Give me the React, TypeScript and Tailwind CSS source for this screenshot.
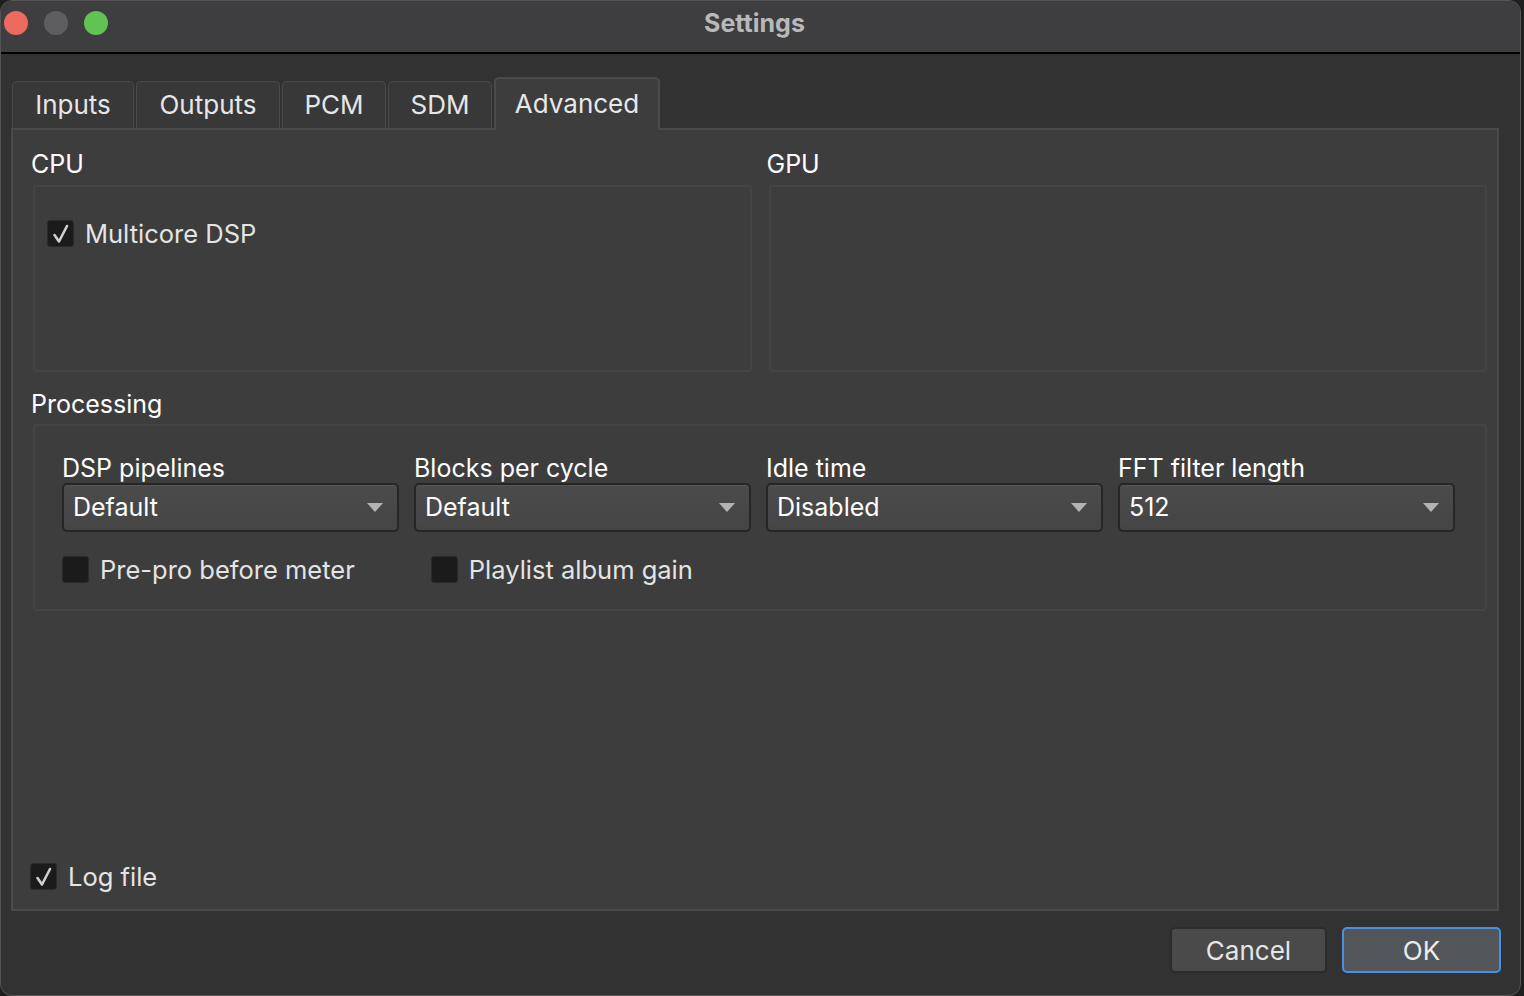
import React from "react";

const font = { fontFamily: "Inter, 'Noto Sans', sans-serif" };

const Check = ({ checked, label }: { checked?: boolean; label: string }) => (
  <div className="flex items-center gap-[11px]">
    <div className="w-[27px] h-[27px] rounded-[3px] bg-[#1b1b1b] border border-[#2b2b2b] flex items-center justify-center">
      {checked && (
        <svg width="18" height="20" viewBox="0 0 18 20">
          <path d="M2.5 11 L7 17.5 L15 2" fill="none" stroke="#cfcfcf" strokeWidth="2.6" strokeLinecap="round" strokeLinejoin="round" />
        </svg>
      )}
    </div>
    <span className="text-[25.5px] text-[#e4e4e4] leading-none">{label}</span>
  </div>
);

const Combo = ({ label, value }: { label: string; value: string }) => (
  <div className="flex flex-col">
    <span className="text-[25px] text-white leading-[30px]">{label}</span>
    <div className="w-[337px] h-[49px] rounded-[5px] border-2 border-[#262626] bg-gradient-to-b from-[#4b4b4b] to-[#454545] flex items-center justify-between pl-[9px] pr-[14px] shadow-[inset_0_1px_0_#555]">
      <span className="text-[25px] text-white leading-none">{value}</span>
      <svg width="16" height="9" viewBox="0 0 16 9">
        <path d="M0 0 H16 L8 9 Z" fill="#b4b4b4" />
      </svg>
    </div>
  </div>
);

const tabs = [
  { t: "Inputs", w: "w-[122px]" },
  { t: "Outputs", w: "w-[144px]" },
  { t: "PCM", w: "w-[104px]" },
  { t: "SDM", w: "w-[104px]" },
];

export default function App() {
  return (
    <div className="w-[1524px] h-[996px] bg-[#1e1e1e] overflow-hidden" style={font}>
      <div className="w-[1521px] h-[996px] rounded-[12px] bg-[#323232] border border-[#555] flex flex-col overflow-hidden">
        {/* title bar */}
        <div className="h-[53px] bg-[#3e3e40] border-b-2 border-black flex items-start pt-[10px] relative shrink-0">
          <div className="flex gap-[16px] pl-[3px]">
            <div className="w-[24px] h-[24px] rounded-full bg-[#ed6a5e]" />
            <div className="w-[24px] h-[24px] rounded-full bg-[#5e5e60]" />
            <div className="w-[24px] h-[24px] rounded-full bg-[#5fc453]" />
          </div>
          <div className="absolute inset-x-0 top-0 h-[46px] flex items-center justify-center pr-[12px]">
            <span className="text-[25px] font-bold text-[#b9b9bb]">Settings</span>
          </div>
        </div>

        {/* body */}
        <div className="flex flex-col pl-[10px] pr-[21px] pt-[22px]">
          <div className="flex items-end gap-[2px] pl-[1px] h-[52px]">
            {tabs.map(({ t, w }) => (
              <div
                key={t}
                className={`${w} h-[47px] rounded-t-[5px] bg-[#383838] border border-b-0 border-[#4a4a4a] flex items-center justify-center pb-[2px] text-[26px] text-[#e6e6e6]`}
              >
                {t}
              </div>
            ))}
            <div className="w-[166px] h-[53px] rounded-t-[5px] bg-[#3d3d3d] border-2 border-b-0 border-[#4b4b4b] flex items-center justify-center pb-[3px] text-[26px] text-[#e8e8e8] -mb-[2px] relative z-10">
              Advanced
            </div>
          </div>

          {/* panel */}
          <div className="h-[783px] bg-[#3d3d3d] border-2 border-[#4a4a4a] flex flex-col pl-[18px] pr-[10px]">
            <div className="grid grid-cols-2 gap-[15px] pt-[19px]">
              <div className="flex flex-col">
                <span className="text-[25px] text-white leading-[30px]">CPU</span>
                <div className="mt-[6px] ml-[2px] h-[187px] rounded-[4px] border-2 border-[#444] pl-[12px] pt-[33px]">
                  <Check checked label="Multicore DSP" />
                </div>
              </div>
              <div className="flex flex-col">
                <span className="text-[25px] text-white leading-[30px]">GPU</span>
                <div className="mt-[6px] ml-[2px] h-[187px] rounded-[4px] border-2 border-[#444]" />
              </div>
            </div>

            <span className="mt-[17px] text-[25px] text-white leading-[30px]">Processing</span>
            <div className="mt-[5px] ml-[2px] h-[187px] rounded-[4px] border-2 border-[#444] pl-[27px] pt-[27px]">
              <div className="grid grid-cols-4 w-[1408px]">
                <Combo label="DSP pipelines" value="Default" />
                <Combo label="Blocks per cycle" value="Default" />
                <Combo label="Idle time" value="Disabled" />
                <Combo label="FFT filter length" value="512" />
              </div>
              <div className="flex gap-[76px] mt-[24px]">
                <Check label="Pre-pro before meter" />
                <Check label="Playlist album gain" />
              </div>
            </div>

            <div className="mt-auto mb-[19px] -ml-[1px]">
              <Check checked label="Log file" />
            </div>
          </div>

          {/* buttons */}
          <div className="flex justify-end gap-[15px] mt-[16px] -mr-[2px]">
            <button className="w-[157px] h-[46px] rounded-[5px] bg-[#4a4a4a] border-2 border-[#2c2c2c] text-[26px] text-[#e6e6e6]">
              Cancel
            </button>
            <button className="w-[159px] h-[46px] rounded-[5px] bg-[#52555a] border-2 border-[#4a90e2] text-[26px] text-[#ececec]">
              OK
            </button>
          </div>
        </div>
      </div>
    </div>
  );
}
